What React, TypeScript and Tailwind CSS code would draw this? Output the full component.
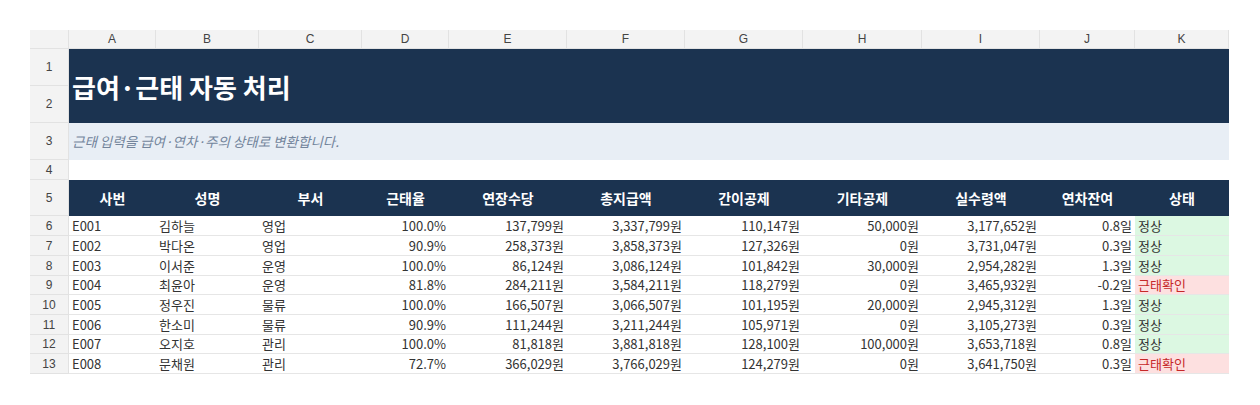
import React from "react";

const cols = ["A", "B", "C", "D", "E", "F", "G", "H", "I", "J", "K"];
const heads = ["사번", "성명", "부서", "근태율", "연장수당", "총지급액", "간이공제", "기타공제", "실수령액", "연차잔여", "상태"];

const rows = [
  ["E001", "김하늘", "영업", "100.0%", "137,799원", "3,337,799원", "110,147원", "50,000원", "3,177,652원", "0.8일", "정상"],
  ["E002", "박다온", "영업", "90.9%", "258,373원", "3,858,373원", "127,326원", "0원", "3,731,047원", "0.3일", "정상"],
  ["E003", "이서준", "운영", "100.0%", "86,124원", "3,086,124원", "101,842원", "30,000원", "2,954,282원", "1.3일", "정상"],
  ["E004", "최윤아", "운영", "81.8%", "284,211원", "3,584,211원", "118,279원", "0원", "3,465,932원", "-0.2일", "근태확인"],
  ["E005", "정우진", "물류", "100.0%", "166,507원", "3,066,507원", "101,195원", "20,000원", "2,945,312원", "1.3일", "정상"],
  ["E006", "한소미", "물류", "90.9%", "111,244원", "3,211,244원", "105,971원", "0원", "3,105,273원", "0.3일", "정상"],
  ["E007", "오지호", "관리", "100.0%", "81,818원", "3,881,818원", "128,100원", "100,000원", "3,653,718원", "0.8일", "정상"],
  ["E008", "문채원", "관리", "72.7%", "366,029원", "3,766,029원", "124,279원", "0원", "3,641,750원", "0.3일", "근태확인"],
];

const rowH = ["h-[20px]", "h-[20px]", "h-[20px]", "h-[19px]", "h-[20px]", "h-[20px]", "h-[19px]", "h-[20px]"];

const kr = "font-['Noto_Sans_CJK_KR','Noto_Sans',sans-serif]";
const grid = "grid grid-cols-[39px_87px_103px_103px_87px_118px_118px_118px_119px_118px_95px_94px]";

function RowNum({ n, h }: { n: number | string; h: string }) {
  return (
    <div className={`${h} flex items-center justify-center bg-[#f3f3f3] border-r border-b border-[#e2e2e2] text-[12px] text-[#444] font-['Liberation_Sans',sans-serif]`}>
      {n}
    </div>
  );
}

export default function App() {
  return (
    <div className="w-[1260px] h-[405px] bg-white pt-[30px] pl-[30px]">
      <div className={`w-[1199px] ${kr}`}>
        {/* column letters */}
        <div className={grid}>
          <div className="h-[19px] bg-[#f3f3f3] border-r border-b border-[#e2e2e2]" />
          {cols.map((c) => (
            <div
              key={c}
              className="h-[19px] flex items-center justify-center bg-[#f3f3f3] border-r border-b border-[#e2e2e2] text-[12px] text-[#444] font-['Liberation_Sans',sans-serif]"
            >
              {c}
            </div>
          ))}
        </div>

        {/* title rows */}
        <div className="grid grid-cols-[39px_1160px]">
          <div className="flex flex-col">
            <RowNum n={1} h="h-[37px]" />
            <RowNum n={2} h="h-[37px]" />
          </div>
          <div className="h-[74px] bg-[#1b3350] flex items-center pl-[3px] text-white text-[26px] font-bold">
            급여·근태 자동 처리
          </div>
        </div>

        {/* subtitle */}
        <div className="grid grid-cols-[39px_1160px]">
          <RowNum n={3} h="h-[37px]" />
          <div className="h-[37px] bg-[#e8eef5] flex items-center pl-[3px] text-[13.5px] italic text-[#73859c]">
            근태 입력을 급여·연차·주의 상태로 변환합니다.
          </div>
        </div>

        {/* empty row */}
        <div className="grid grid-cols-[39px_1160px]">
          <RowNum n={4} h="h-[20px]" />
          <div className="h-[20px] bg-white" />
        </div>

        {/* header row */}
        <div className={grid}>
          <RowNum n={5} h="h-[36px]" />
          {heads.map((h) => (
            <div key={h} className="h-[36px] bg-[#1b3350] flex items-center justify-center text-white text-[14px] font-bold">
              {h}
            </div>
          ))}
        </div>

        {/* data */}
        {rows.map((r, i) => (
          <div key={r[0]} className={grid}>
            <RowNum n={i + 6} h={rowH[i]} />
            {r.map((v, j) => {
              const left = j < 3;
              const status = j === 10;
              const warn = status && v !== "정상";
              let cls = `${rowH[i]} flex items-center border-b border-[#e6e6e6] text-[13px] text-[#333] whitespace-nowrap `;
              if (status) {
                cls += warn ? "bg-[#fde0e0] text-[#c62828] pl-[3px] text-[13.5px]" : "bg-[#dcf8e2] text-[#2e8b3e] pl-[3px] text-[13.5px]";
              } else if (left) {
                cls += "pl-[3px]";
              } else {
                cls += "justify-end pr-[3px]";
              }
              return (
                <div key={j} className={cls}>
                  {v}
                </div>
              );
            })}
          </div>
        ))}
      </div>
    </div>
  );
}
